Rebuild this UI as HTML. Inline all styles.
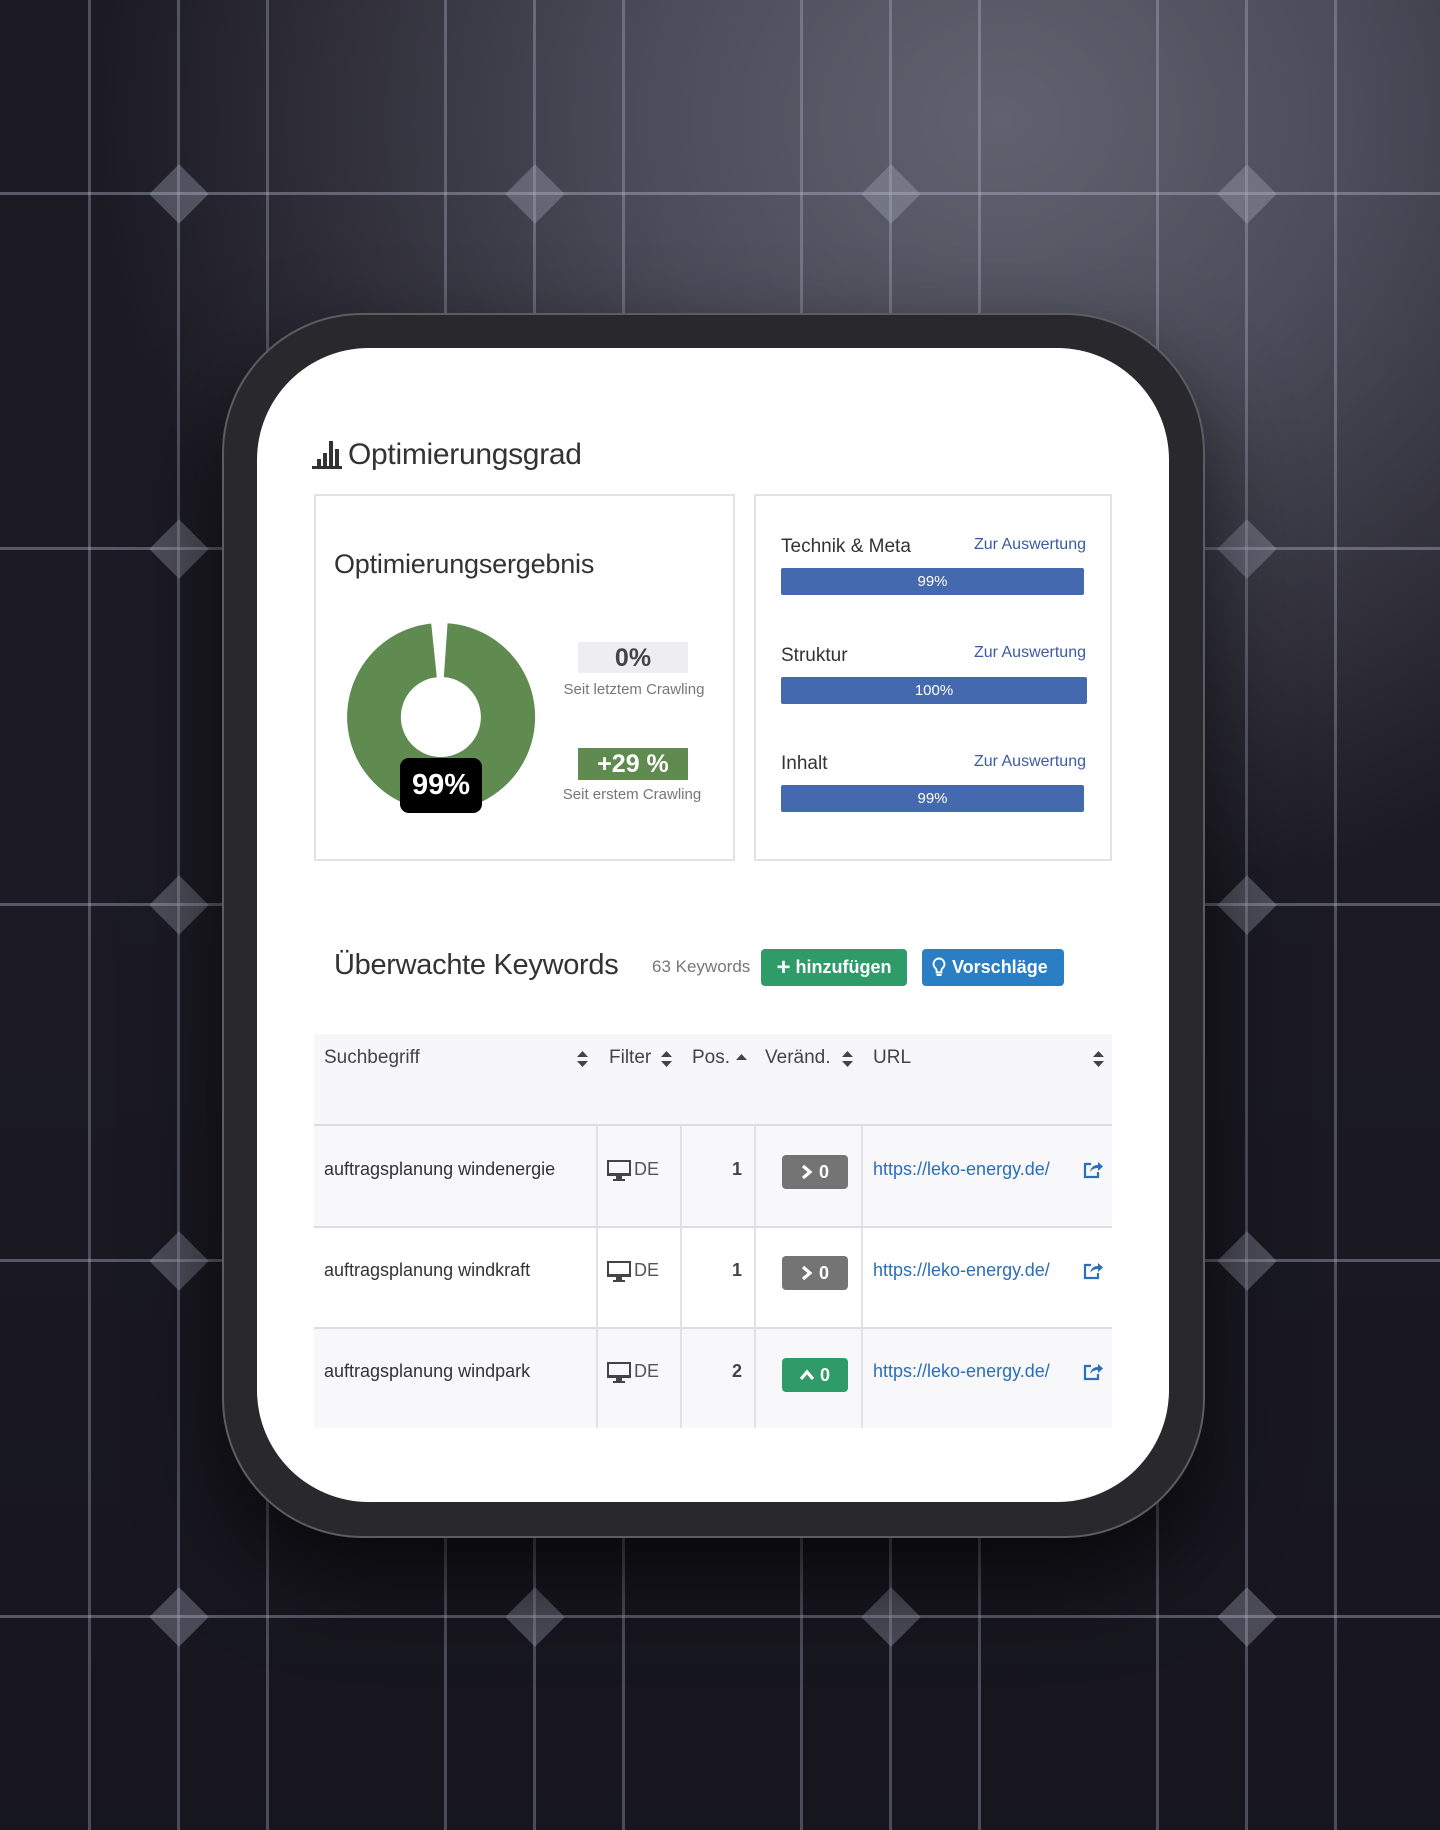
<!DOCTYPE html>
<html><head><meta charset="utf-8"><style>
*{margin:0;padding:0;box-sizing:border-box}
body{width:1440px;height:1830px;position:relative;overflow:hidden;font-family:"Liberation Sans",sans-serif;
background:radial-gradient(ellipse 900px 800px at 1000px 120px,#60636f 0%,#4b4c59 40%,#2f2e39 75%,#1c1b24 100%),#1c1b24;}
.bgfade{position:absolute;left:0;top:0;width:1440px;height:1830px;background:linear-gradient(180deg,rgba(0,0,0,0) 0%,rgba(0,0,0,0) 45%,rgba(18,17,25,.55) 100%);}
.vl{position:absolute;top:0;width:3px;height:1830px;background:rgba(190,192,212,.32)}
.hl{position:absolute;left:0;height:3px;width:1440px;background:rgba(190,192,212,.38)}
.dm{position:absolute;width:42px;height:42px;background:rgba(170,172,192,.35);transform:rotate(45deg)}
.phone{position:absolute;left:222px;top:313px;width:983px;height:1225px;border-radius:140px;background:#29282c;border:2px solid #5c5c62;box-shadow:0 40px 90px rgba(0,0,0,.65)}
.screen{position:absolute;left:257px;top:348px;width:912px;height:1154px;border-radius:112px;background:#fff}
.a{position:absolute;white-space:nowrap}
.card{position:absolute;border:2px solid #e2e2e4;background:#fff}
.lab{font-size:19px;color:#333}
.zur{font-size:16px;color:#3b5ba5;text-align:right}
.bar{position:absolute;background:#4469ae;color:#fff;font-size:15px;text-align:center;line-height:27px;height:27px;border-radius:2px}
.th{font-size:19px;color:#444}
.td{font-size:18px;color:#333}
.sort{position:absolute;width:9px}
.badge{position:absolute;left:782px;width:66px;height:34px;border-radius:4px;color:#fff;font-weight:bold;font-size:18px;line-height:34px;text-align:center}
.link{font-size:18px;color:#2a6fb7}
</style></head><body>
<div class="bgfade"></div>
<!-- grid -->
<div class="vl" style="left:88px"></div><div class="vl" style="left:177px"></div><div class="vl" style="left:266px"></div>
<div class="vl" style="left:444px"></div><div class="vl" style="left:533px"></div><div class="vl" style="left:622px"></div>
<div class="vl" style="left:800px"></div><div class="vl" style="left:889px"></div><div class="vl" style="left:978px"></div>
<div class="vl" style="left:1156px"></div><div class="vl" style="left:1245px"></div><div class="vl" style="left:1334px"></div>
<div class="hl" style="top:192px"></div><div class="hl" style="top:547px"></div><div class="hl" style="top:903px"></div><div class="hl" style="top:1259px"></div><div class="hl" style="top:1615px"></div>
<div class="dm" style="left:158px;top:173px"></div><div class="dm" style="left:514px;top:173px"></div><div class="dm" style="left:870px;top:173px"></div><div class="dm" style="left:1226px;top:173px"></div>
<div class="dm" style="left:158px;top:528px"></div><div class="dm" style="left:1226px;top:528px"></div>
<div class="dm" style="left:158px;top:884px"></div><div class="dm" style="left:1226px;top:884px"></div>
<div class="dm" style="left:158px;top:1240px"></div><div class="dm" style="left:1226px;top:1240px"></div>
<div class="dm" style="left:158px;top:1596px"></div><div class="dm" style="left:514px;top:1596px"></div><div class="dm" style="left:870px;top:1596px"></div><div class="dm" style="left:1226px;top:1596px"></div>

<div class="phone"></div>
<div class="screen"></div>

<!-- title -->
<svg class="a" style="left:312px;top:441px" width="30" height="28" viewBox="0 0 30 28"><rect x="0" y="25" width="30" height="3" fill="#333"/><rect x="5" y="18" width="4" height="8" fill="#333"/><rect x="11" y="12" width="4" height="14" fill="#333"/><rect x="17" y="0" width="4" height="26" fill="#333"/><rect x="23" y="8" width="4" height="18" fill="#333"/></svg>
<div class="a" style="left:348px;top:438px;font-size:30px;color:#333;letter-spacing:-0.3px">Optimierungsgrad</div>

<div class="card" style="left:314px;top:494px;width:421px;height:367px"></div>
<div class="card" style="left:754px;top:494px;width:358px;height:367px"></div>

<div class="a" style="left:334px;top:549px;font-size:27px;color:#333;letter-spacing:-0.2px">Optimierungsergebnis</div>
<svg class="a" style="left:0;top:0" width="1440" height="1000"><path d="M447.6,623.2 A94,94 0 1 1 431.2,623.5 L436.8,677.2 A40,40 0 1 0 443.8,677.1 Z" fill="#5f8a50"/></svg>
<div class="a" style="left:400px;top:758px;width:82px;height:55px;background:#000;border-radius:9px;color:#fff;font-size:29px;font-weight:bold;text-align:center;line-height:55px">99%</div>

<div class="a" style="left:578px;top:642px;width:110px;height:31px;background:#eeeef0;color:#444;font-size:25px;font-weight:bold;text-align:center;line-height:32px">0%</div>
<div class="a" style="left:557px;top:681px;width:154px;text-align:center;font-size:15px;color:#777">Seit letztem Crawling</div>
<div class="a" style="left:578px;top:748px;width:110px;height:32px;background:#5f8a50;color:#fff;font-size:25px;font-weight:bold;text-align:center;line-height:33px">+29 %</div>
<div class="a" style="left:557px;top:786px;width:150px;text-align:center;font-size:15px;color:#777">Seit erstem Crawling</div>

<div class="a lab" style="left:781px;top:536px">Technik &amp; Meta</div>
<div class="a zur" style="left:900px;top:536px;width:186px">Zur Auswertung</div>
<div class="bar" style="left:781px;top:568px;width:303px">99%</div>
<div class="a lab" style="left:781px;top:645px">Struktur</div>
<div class="a zur" style="left:900px;top:644px;width:186px">Zur Auswertung</div>
<div class="bar" style="left:781px;top:677px;width:306px">100%</div>
<div class="a lab" style="left:781px;top:753px">Inhalt</div>
<div class="a zur" style="left:900px;top:753px;width:186px">Zur Auswertung</div>
<div class="bar" style="left:781px;top:785px;width:303px">99%</div>

<!-- keywords -->
<div class="a" style="left:334px;top:949px;font-size:29px;color:#333;letter-spacing:-0.3px">Überwachte Keywords</div>
<div class="a" style="left:652px;top:957px;font-size:17px;color:#777">63 Keywords</div>
<div class="a" style="left:761px;top:949px;width:146px;height:37px;background:#2f9b68;border-radius:4px;color:#fff;font-size:18px;font-weight:bold;line-height:37px;text-align:center"><span style="font-size:24px;vertical-align:-2px">+</span> hinzufügen</div>
<div class="a" style="left:922px;top:949px;width:142px;height:37px;background:#2a7ec4;border-radius:4px;color:#fff;font-size:18px;font-weight:bold;line-height:37px;padding-left:30px">Vorschläge</div>
<svg class="a" style="left:932px;top:957px" width="14" height="22" viewBox="0 0 14 22"><path d="M7 1.5a5.5 5.5 0 0 0-3.5 9.7c.8.8 1.2 1.8 1.2 3v1.3h4.6v-1.3c0-1.2.4-2.2 1.2-3A5.5 5.5 0 0 0 7 1.5z" fill="none" stroke="#fff" stroke-width="2"/><rect x="4.5" y="17" width="5" height="2" fill="#fff"/></svg>

<!-- table -->
<div class="a" style="left:314px;top:1034px;width:798px;height:90px;background:#f7f6f9"></div>
<div class="a" style="left:314px;top:1124px;width:798px;height:2px;background:#dedee0"></div>
<div class="a" style="left:314px;top:1126px;width:798px;height:100px;background:#f8f7fa"></div>
<div class="a" style="left:314px;top:1226px;width:798px;height:2px;background:#dedee0"></div>
<div class="a" style="left:314px;top:1228px;width:798px;height:99px;background:#fff"></div>
<div class="a" style="left:314px;top:1327px;width:798px;height:2px;background:#dedee0"></div>
<div class="a" style="left:314px;top:1329px;width:798px;height:99px;background:#f8f7fa"></div>
<div class="a" style="left:596px;top:1126px;width:2px;height:302px;background:#e2e2e4"></div>
<div class="a" style="left:680px;top:1126px;width:2px;height:302px;background:#e2e2e4"></div>
<div class="a" style="left:754px;top:1126px;width:2px;height:302px;background:#e2e2e4"></div>
<div class="a" style="left:861px;top:1126px;width:2px;height:302px;background:#e2e2e4"></div>

<div class="a th" style="left:324px;top:1047px">Suchbegriff</div>
<div class="a th" style="left:609px;top:1047px">Filter</div>
<div class="a th" style="left:692px;top:1047px">Pos.</div>
<div class="a th" style="left:765px;top:1047px">Veränd.</div>
<div class="a th" style="left:873px;top:1047px">URL</div>
<svg class="a" style="left:577px;top:1051px" width="11" height="16"><path d="M5.5 0L11 6H0z M5.5 16L11 10H0z" fill="#444"/></svg>
<svg class="a" style="left:661px;top:1051px" width="11" height="16"><path d="M5.5 0L11 6H0z M5.5 16L11 10H0z" fill="#444"/></svg>
<svg class="a" style="left:736px;top:1054px" width="11" height="7"><path d="M5.5 0L11 6H0z" fill="#444"/></svg>
<svg class="a" style="left:842px;top:1051px" width="11" height="16"><path d="M5.5 0L11 6H0z M5.5 16L11 10H0z" fill="#444"/></svg>
<svg class="a" style="left:1093px;top:1051px" width="11" height="16"><path d="M5.5 0L11 6H0z M5.5 16L11 10H0z" fill="#444"/></svg>

<!-- rows -->
<div class="a td" style="left:324px;top:1159px">auftragsplanung windenergie</div>
<div class="a td" style="left:324px;top:1260px">auftragsplanung windkraft</div>
<div class="a td" style="left:324px;top:1361px">auftragsplanung windpark</div>

<svg class="a" style="left:607px;top:1160px" width="24" height="22" viewBox="0 0 24 22"><rect x="1" y="1" width="22" height="14" fill="none" stroke="#444" stroke-width="2"/><rect x="1" y="13" width="22" height="3" fill="#444"/><rect x="9" y="16" width="6" height="3" fill="#444"/><rect x="6" y="19" width="12" height="2" fill="#444"/></svg>
<svg class="a" style="left:607px;top:1261px" width="24" height="22" viewBox="0 0 24 22"><rect x="1" y="1" width="22" height="14" fill="none" stroke="#444" stroke-width="2"/><rect x="1" y="13" width="22" height="3" fill="#444"/><rect x="9" y="16" width="6" height="3" fill="#444"/><rect x="6" y="19" width="12" height="2" fill="#444"/></svg>
<svg class="a" style="left:607px;top:1362px" width="24" height="22" viewBox="0 0 24 22"><rect x="1" y="1" width="22" height="14" fill="none" stroke="#444" stroke-width="2"/><rect x="1" y="13" width="22" height="3" fill="#444"/><rect x="9" y="16" width="6" height="3" fill="#444"/><rect x="6" y="19" width="12" height="2" fill="#444"/></svg>
<div class="a td" style="left:634px;top:1159px;color:#555">DE</div>
<div class="a td" style="left:634px;top:1260px;color:#555">DE</div>
<div class="a td" style="left:634px;top:1361px;color:#555">DE</div>

<div class="a td" style="left:700px;top:1159px;width:42px;text-align:right;font-weight:bold;color:#444">1</div>
<div class="a td" style="left:700px;top:1260px;width:42px;text-align:right;font-weight:bold;color:#444">1</div>
<div class="a td" style="left:700px;top:1361px;width:42px;text-align:right;font-weight:bold;color:#444">2</div>

<div class="badge" style="top:1155px;background:#747474"><svg width="12" height="14" viewBox="0 0 12 14" style="vertical-align:-1px;margin-right:6px"><path d="M2 1l7 6-7 6" fill="none" stroke="#fff" stroke-width="3.2"/></svg>0</div>
<div class="badge" style="top:1256px;background:#747474"><svg width="12" height="14" viewBox="0 0 12 14" style="vertical-align:-1px;margin-right:6px"><path d="M2 1l7 6-7 6" fill="none" stroke="#fff" stroke-width="3.2"/></svg>0</div>
<div class="badge" style="top:1358px;background:#2f9b68"><svg width="14" height="12" viewBox="0 0 14 12" style="vertical-align:0;margin-right:6px"><path d="M1 10l6-7 6 7" fill="none" stroke="#fff" stroke-width="3.2"/></svg>0</div>

<div class="a link" style="left:873px;top:1159px">https://leko-energy.de/</div>
<div class="a link" style="left:873px;top:1260px">https://leko-energy.de/</div>
<div class="a link" style="left:873px;top:1361px">https://leko-energy.de/</div>
<svg class="a" style="left:1083px;top:1160px" width="20" height="19" viewBox="0 0 20 19"><path d="M8 4H2v13h13v-5" fill="none" stroke="#2a6fb7" stroke-width="2.2"/><path d="M7 12c1-5 4-7 8-7V2l5 4.5-5 4.5V8c-3 0-6 1-8 4z" fill="#2a6fb7"/></svg>
<svg class="a" style="left:1083px;top:1261px" width="20" height="19" viewBox="0 0 20 19"><path d="M8 4H2v13h13v-5" fill="none" stroke="#2a6fb7" stroke-width="2.2"/><path d="M7 12c1-5 4-7 8-7V2l5 4.5-5 4.5V8c-3 0-6 1-8 4z" fill="#2a6fb7"/></svg>
<svg class="a" style="left:1083px;top:1362px" width="20" height="19" viewBox="0 0 20 19"><path d="M8 4H2v13h13v-5" fill="none" stroke="#2a6fb7" stroke-width="2.2"/><path d="M7 12c1-5 4-7 8-7V2l5 4.5-5 4.5V8c-3 0-6 1-8 4z" fill="#2a6fb7"/></svg>
</body></html>
